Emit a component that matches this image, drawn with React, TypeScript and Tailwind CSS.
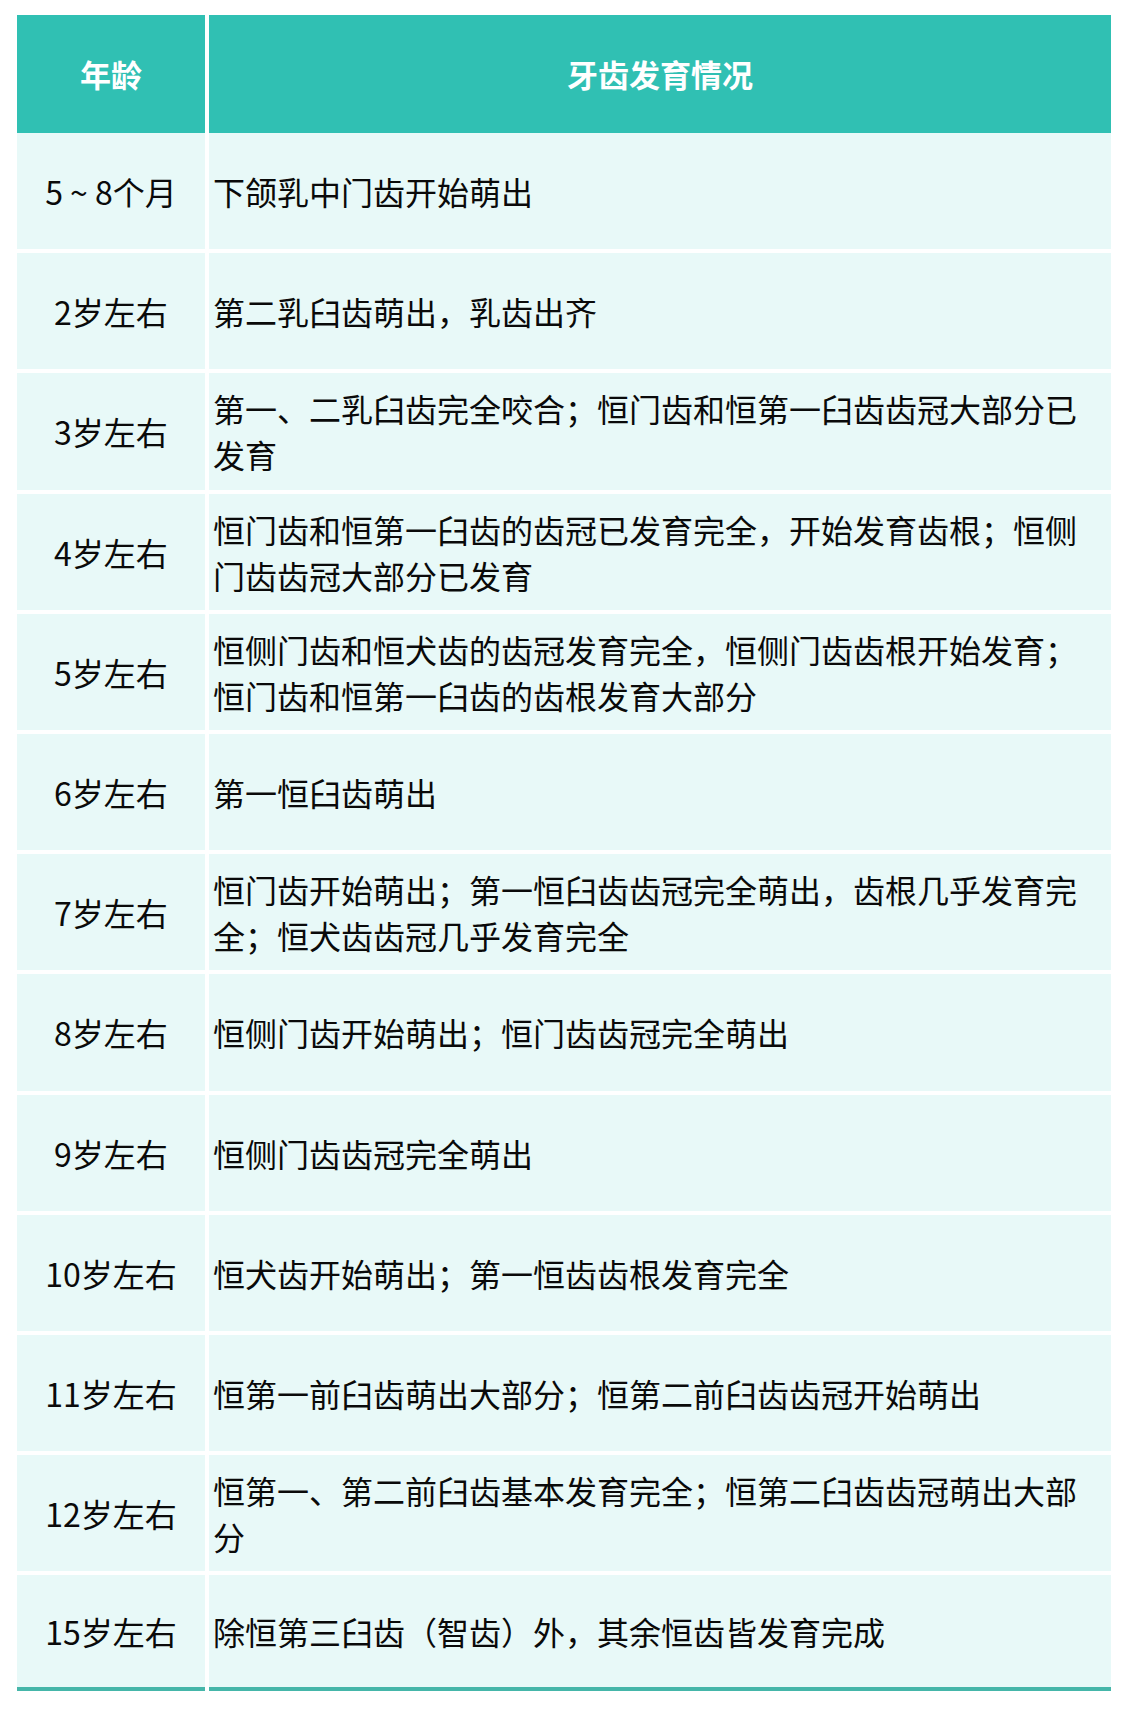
import React from "react";

const rows: [string, string][] = [
  ["5 ~ 8个月", "下颌乳中门齿开始萌出"],
  ["2岁左右", "第二乳臼齿萌出，乳齿出齐"],
  ["3岁左右", "第一、二乳臼齿完全咬合；恒门齿和恒第一臼齿齿冠大部分已发育"],
  ["4岁左右", "恒门齿和恒第一臼齿的齿冠已发育完全，开始发育齿根；恒侧门齿齿冠大部分已发育"],
  ["5岁左右", "恒侧门齿和恒犬齿的齿冠发育完全，恒侧门齿齿根开始发育；恒门齿和恒第一臼齿的齿根发育大部分"],
  ["6岁左右", "第一恒臼齿萌出"],
  ["7岁左右", "恒门齿开始萌出；第一恒臼齿齿冠完全萌出，齿根几乎发育完全；恒犬齿齿冠几乎发育完全"],
  ["8岁左右", "恒侧门齿开始萌出；恒门齿齿冠完全萌出"],
  ["9岁左右", "恒侧门齿齿冠完全萌出"],
  ["10岁左右", "恒犬齿开始萌出；第一恒齿齿根发育完全"],
  ["11岁左右", "恒第一前臼齿萌出大部分；恒第二前臼齿齿冠开始萌出"],
  ["12岁左右", "恒第一、第二前臼齿基本发育完全；恒第二臼齿齿冠萌出大部分"],
  ["15岁左右", "除恒第三臼齿（智齿）外，其余恒齿皆发育完成"],
];

export default function App() {
  return (
    <div
      className="min-h-[1710px] w-[1126px] bg-white pl-[17px] pt-[15px]"
      style={{ fontFamily: '"Noto Sans CJK SC", "Noto Sans", sans-serif' }}
    >
      <div className="flex w-[1094px] flex-col">
        {/* header */}
        <div className="flex h-[118px] gap-[4px]">
          <div className="flex w-[188px] items-center justify-center bg-[#30c0b3] text-[31px] font-bold text-white">
            年龄
          </div>
          <div className="flex flex-1 items-center justify-center bg-[#30c0b3] text-[31px] font-bold text-white">
            牙齿发育情况
          </div>
        </div>

        <div className="flex flex-col gap-[4px]">
          {rows.map(([age, desc], i) => {
            const last = i === rows.length - 1;
            return (
              <div key={age} className="flex h-[116.2px] gap-[4px]">
                <div
                  className={
                    "flex w-[188px] items-center justify-center whitespace-nowrap bg-[#e8f9f8] text-[32px] text-[#0a0a0a] " +
                    (last ? "border-b-4 border-[#45b6a9]" : "")
                  }
                >
                  {age}
                </div>
                <div
                  className={
                    "flex flex-1 items-center bg-[#e8f9f8] pl-[4px] pr-[16px] text-[32px] leading-[46px] text-[#0a0a0a] " +
                    (last ? "border-b-4 border-[#45b6a9]" : "")
                  }
                >
                  <p>{desc}</p>
                </div>
              </div>
            );
          })}
        </div>
      </div>
    </div>
  );
}
